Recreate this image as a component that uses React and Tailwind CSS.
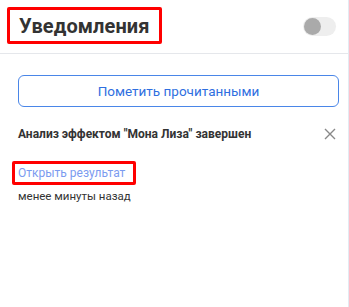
import React, { useState } from "react";

const App = () => {
  const [enabled, setEnabled] = useState(false);

  return (
    <div className="w-[349px] h-[307px] bg-white font-['Roboto',sans-serif] text-[#333]">
      <div className="h-full w-[349px] border-r border-[#e3eaf2] flex flex-col">
        {/* Header */}
        <div className="h-[54px] flex items-center justify-between pl-[7px] pr-[12px] border-b border-[#e5e7eb]">
          <div className="h-[37px] -mt-[2px] flex items-center border-[3px] border-[#ff0000] rounded-[2px] px-[9px]">
            <h2 className="text-[20px] font-bold text-[#333] leading-none tracking-[0.1px]">Уведомления</h2>
          </div>
          <button
            type="button"
            onClick={() => setEnabled(!enabled)}
            className="w-[33px] h-[19px] rounded-full bg-[#eeeeee] flex items-center px-[1px]"
          >
            <span className="w-[17px] h-[17px] rounded-full bg-[#aaaaaa]" />
          </button>
        </div>

        {/* Body */}
        <div className="pl-[18px] pr-[9px] pt-[21px]">
          <button
            type="button"
            className="w-full h-[32px] rounded-[6px] border border-[#4a86e8] text-[#2f6fe0] text-[13.5px]"
          >
            Пометить прочитанными
          </button>

          <div className="mt-[18px] flex items-center justify-between">
            <span className="text-[12px] font-bold text-[#333]">Анализ эффектом "Мона Лиза" завершен</span>
            <button type="button" className="mr-[3px] text-[#888]">
              <svg width="12" height="12" viewBox="0 0 12 12" fill="none" stroke="currentColor" strokeWidth="1.4">
                <path d="M1 1L11 11M11 1L1 11" />
              </svg>
            </button>
          </div>

          <div className="mt-[18px] -ml-[6px] inline-flex h-[24px] items-center border-[3px] border-[#ff0000] rounded-[2px] pl-[3px] pr-[8px]">
            <a href="#" className="text-[12px] text-[#7b9bf0]">Открыть результат</a>
          </div>
          <p className="mt-[3px] text-[11.5px] text-[#333]">менее минуты назад</p>
        </div>
      </div>
    </div>
  );
};

export default App;
